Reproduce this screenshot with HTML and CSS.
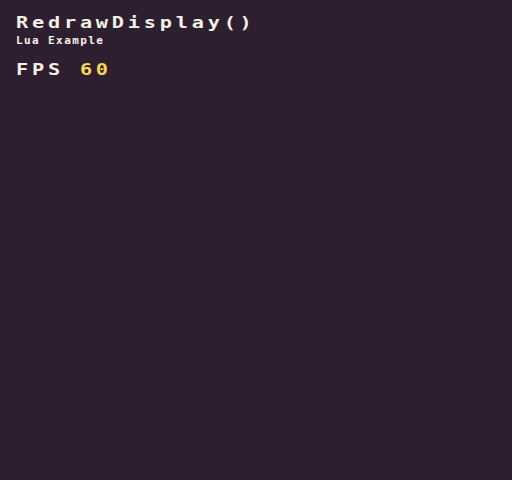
FILE: index.html
```html
<!DOCTYPE html>
<html>
<head>
<meta charset="utf-8">
<link rel="stylesheet" href="styles.css">
</head>
<body>
<main class="screen">
  <h1 class="title"><span class="wide">RedrawDisplay()</span></h1>
  <p class="subtitle">Lua Example</p>
  <p class="fps"><span class="wide">FPS <span class="fps-value">60</span></span></p>
</main>
</body>
</html>
```
FILE: styles.css
```css
html, body {
  margin: 0;
  padding: 0;
  background: #2d1f30;
}
.screen {
  width: 512px;
  height: 480px;
  box-sizing: border-box;
  padding: 15px 0 0 16px;
  display: flex;
  flex-direction: column;
  font-family: "DejaVu Sans Mono", monospace;
  font-weight: bold;
  color: #f5f0e6;
}
.wide {
  display: inline-block;
  transform: scaleX(1.35);
  transform-origin: left center;
  white-space: pre;
}
.title {
  margin: 0;
  font-size: 15px;
  line-height: 16px;
  letter-spacing: 2.8px;
  font-weight: bold;
}
.subtitle {
  margin: 4px 0 0;
  font-size: 11px;
  line-height: 12px;
  letter-spacing: 1.4px;
}
.fps {
  margin: 15px 0 0;
  font-size: 15px;
  line-height: 16px;
  letter-spacing: 2.8px;
}
.fps-value {
  color: #f8d650;
}
```
